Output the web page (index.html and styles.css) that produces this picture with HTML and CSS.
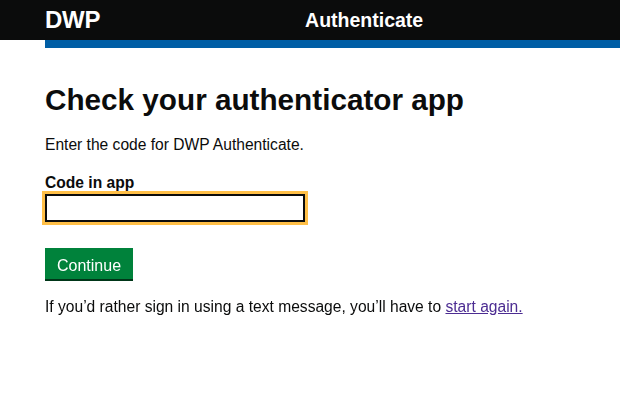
FILE: index.html
```html
<!DOCTYPE html>
<html lang="en">
<head>
    <meta charset="UTF-8">
    <meta name="viewport" content="width=device-width, initial-scale=1.0">
    <title>Check your authenticator app - DWP Authenticate</title>
    <link rel="stylesheet" href="styles.css">
</head>
<body>
    <header class="header">
        <div class="header-inner">
            <span class="header-logo">DWP</span>
            <span class="header-service">Authenticate</span>
        </div>
        <div class="header-stripe"></div>
    </header>

    <main class="main">
        <h1 class="heading">Check your authenticator app</h1>
        <p class="body-text">Enter the code for DWP Authenticate.</p>

        <form class="form">
            <label class="label" for="code">Code in app</label>
            <input class="input" type="text" id="code" name="code" autocomplete="off" autofocus>
            <button type="submit" class="button">Continue</button>
        </form>

        <p class="body-text">If you’d rather sign in using a text message, you’ll have to <a href="#" class="link">start again.</a></p>
    </main>
</body>
</html>
```

FILE: styles.css
```css
* {
    margin: 0;
    padding: 0;
    box-sizing: border-box;
}

body {
    font-family: 'Liberation Sans', Arial, sans-serif;
    color: #0b0c0c;
    background: #fff;
}

.header-inner {
    height: 40px;
    display: flex;
    align-items: center;
    padding-left: 45px;
    background: #0b0c0c;
}

.header-logo {
    color: #fff;
    font-weight: bold;
    font-size: 24px;
    letter-spacing: -0.3px;
}

.header-service {
    color: #fff;
    font-weight: bold;
    font-size: 19.5px;
    margin-left: 205px;
}

.header-stripe {
    height: 8px;
    margin-left: 45px;
    background: #005ea5;
}

.main {
    padding: 34px 45px 0;
}

.heading {
    font-size: 29.7px;
    font-weight: bold;
    line-height: 1.2;
    margin-bottom: 17px;
}

.body-text {
    font-size: 15.6px;
    line-height: 20px;
}

.form {
    display: flex;
    flex-direction: column;
    align-items: flex-start;
    margin-top: 19px;
    margin-bottom: 18px;
}

.label {
    font-weight: bold;
    font-size: 15.6px;
    line-height: 18px;
    margin-bottom: 2px;
}

.input {
    width: 260px;
    height: 28px;
    border: 2px solid #0b0c0c;
    outline: 3px solid #ffbf47;
    font: inherit;
    font-size: 16px;
    padding: 2px 4px;
    margin-bottom: 26px;
}

.button {
    background: #00823b;
    color: #fff;
    border: none;
    box-shadow: 0 2px 0 #003618;
    font: inherit;
    font-size: 16px;
    line-height: 19px;
    padding: 8px 12px 4px;
    cursor: pointer;
}

.link {
    color: #4c2c92;
}
```
